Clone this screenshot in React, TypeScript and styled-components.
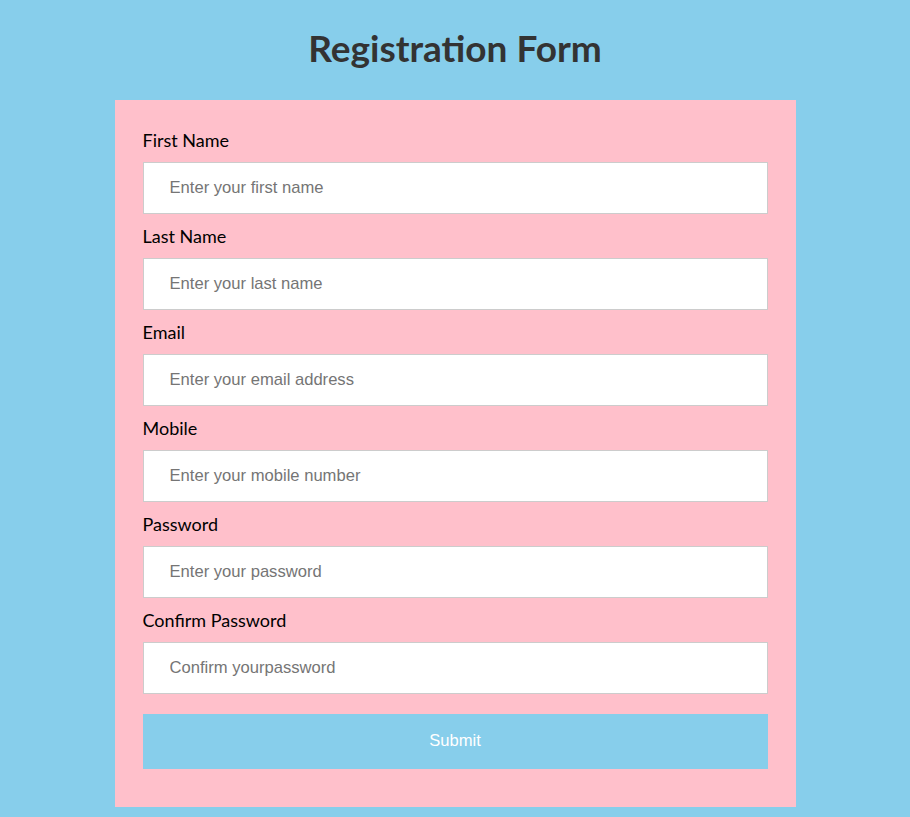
import React from "react";
import styled, { createGlobalStyle } from "styled-components";

const Global = createGlobalStyle`
  html, body { margin: 0; padding: 0; background: #87ceeb; }
  * { box-sizing: border-box; }
`;

const Page = styled.div`
  display: flex;
  flex-direction: column;
  align-items: center;
  padding-bottom: 10px;
`;

const Title = styled.h1`
  margin: 26px 0 30px;
  height: 44px;
  line-height: 44px;
  font-family: "Lato", "Open Sans", sans-serif;
  font-weight: 700;
  font-size: 37px;
  color: #333333;
  text-align: center;
`;

const Card = styled.form`
  width: 681px;
  background: #ffc0cb;
  padding: 28px 28px 38px;
  display: flex;
  flex-direction: column;
  gap: 10px;
`;

const Field = styled.div`
  display: flex;
  flex-direction: column;
`;

const Label = styled.label`
  height: 22px;
  line-height: 24px;
  margin-bottom: 12px;
  font-family: "Lato", "Open Sans", sans-serif;
  font-size: 18px;
  color: #000;
`;

const Input = styled.input`
  height: 52px;
  width: 100%;
  border: 1px solid #cccccc;
  background: #fff;
  padding: 0 25px 1px 26px;
  font-family: "Liberation Sans", Arial, sans-serif;
  font-size: 16.6px;
  color: #333;
  outline: none;
  &::placeholder { color: #757575; }
`;

const Button = styled.button`
  margin-top: 10px;
  height: 55px;
  width: 100%;
  border: none;
  background: #87ceeb;
  color: #fff;
  font-family: "Liberation Sans", Arial, sans-serif;
  font-size: 16.6px;
  padding: 0 0 2px;
  cursor: pointer;
`;

const fields = [
  { label: "First Name", ph: "Enter your first name", type: "text" },
  { label: "Last Name", ph: "Enter your last name", type: "text" },
  { label: "Email", ph: "Enter your email address", type: "email" },
  { label: "Mobile", ph: "Enter your mobile number", type: "tel" },
  { label: "Password", ph: "Enter your password", type: "password" },
  { label: "Confirm Password", ph: "Confirm yourpassword", type: "password" },
];

export default function App() {
  return (
    <Page>
      <Global />
      <Title>Registration Form</Title>
      <Card onSubmit={(e) => e.preventDefault()}>
        {fields.map((f) => (
          <Field key={f.label}>
            <Label>{f.label}</Label>
            <Input type={f.type} placeholder={f.ph} />
          </Field>
        ))}
        <Button type="submit">Submit</Button>
      </Card>
    </Page>
  );
}
